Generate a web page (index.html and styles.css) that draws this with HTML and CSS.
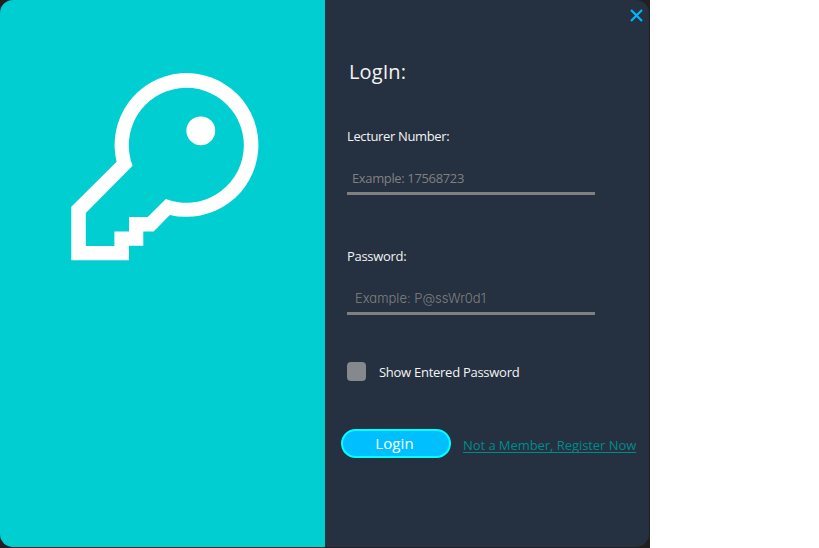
FILE: index.html
```html
<!DOCTYPE html>
<html lang="en">
<head>
<meta charset="utf-8">
<title>LogIn</title>
<link rel="stylesheet" href="styles.css">
</head>
<body>
<div class="window">
  <main class="card">
    <section class="brand">
      <svg class="key" viewBox="71 73 188 188" aria-hidden="true">
        <path fill="#fff" fill-rule="evenodd" d="M71.3 206.8 116.6 161.8A71.9 71.9 0 1 1 169.8 214.9L153.7 231.4H143.3V245.8H129V260.2H71.3ZM85.8 213V246H114.4V231.5H129V217.1H147.7L165.8 199A57.5 57.5 0 1 0 132.6 165.8Z"/>
        <circle cx="200.8" cy="130.8" r="14.4" fill="#fff"/>
      </svg>
    </section>
    <form class="form">
      <button class="close" type="button" aria-label="Close">
        <svg viewBox="0 0 13 13"><path d="M1 1 12 12M12 1 1 12"/></svg>
      </button>
      <h1 class="title"><span>LogIn:</span></h1>
      <div class="field">
        <label class="label number-label" for="number">Lecturer Number:</label>
        <div class="entry number-entry" id="number"><span>Example: 17568723</span></div>
      </div>
      <div class="field">
        <label class="label password-label" for="password">Password:</label>
        <div class="entry password-entry" id="password"><span>Example: P@ssWr0d1</span></div>
      </div>
      <div class="show"><span class="box"></span><span class="show-label">Show Entered Password</span></div>
      <div class="actions">
        <button class="login" type="button"><span>Login</span></button>
        <a class="register" href="#">Not a Member, Register Now</a>
      </div>
    </form>
  </main>
</div>
</body>
</html>
```
FILE: styles.css
```css
* { box-sizing: border-box; }
body {
  margin: 0;
  height: 548px;
  overflow: hidden;
  background: #fff;
  font-family: "Open Sans", "Noto Sans", sans-serif;
  font-size: 13px;
}
.window {
  width: 650px;
  height: 548px;
  padding: 0 1px 1px 0;
  background: #202020;
}
.card {
  display: flex;
  height: 547px;
  border-radius: 13px;
  overflow: hidden;
  background: #253040;
}
.brand {
  width: 325px;
  padding: 73px 0 0 71px;
  background: #00ced1;
}
.key { display: block; width: 188px; height: 188px; }
.form {
  position: relative;
  width: 324px;
  padding: 58px 0 0 22px;
  color: #f4f4f4;
}
.close {
  position: absolute;
  top: 9px;
  right: 6px;
  width: 13px;
  height: 13px;
  padding: 0;
  border: 0;
  background: none;
}
.close svg {
  display: block;
  width: 13px;
  height: 13px;
  stroke: #00b7f8;
  stroke-width: 2.2;
  fill: none;
}
.title {
  margin: 0 0 36px 2px;
  height: 28px;
  font-size: 20px;
  line-height: 28px;
  font-weight: 400;
  letter-spacing: 0.1px;
}
.field { height: 120px; padding-top: 4px; }
.label { display: block; height: 20px; line-height: 20px; white-space: nowrap; }
.number-label { letter-spacing: -0.36px; }
.password-label { letter-spacing: -0.3px; }
.entry {
  width: 248px;
  height: 49px;
  padding: 22px 0 0 5px;
  border-bottom: 3px solid #808080;
  color: #808080;
  line-height: 20px;
  white-space: nowrap;
}
.number-entry { letter-spacing: -0.36px; }
.password-entry {
  padding-left: 8px;
  font-family: Inter, sans-serif;
  font-feature-settings: "cv11";
  font-weight: 300;
}
.show { display: flex; height: 20px; gap: 13px; margin-top: -1px; }
.box { width: 19px; height: 19px; margin-top: 1px; border-radius: 4px; background: #85888d; }
.show-label { padding-top: 1px; line-height: 20px; letter-spacing: -0.27px; white-space: nowrap; }
.actions {
  display: flex;
  align-items: center;
  gap: 12px;
  margin: 48px 0 0 -6px;
}
.login {
  flex: none;
  width: 110px;
  height: 29px;
  padding: 0 3px 0 0;
  border: 2px solid #00ffff;
  border-radius: 15px;
  background: #00bfff;
  color: #fff;
  font: 15px/25px "Open Sans", sans-serif;
  letter-spacing: 0.1px;
}
.register {
  padding-top: 3px;
  color: #008b8b;
  line-height: 20px;
  letter-spacing: -0.06px;
  white-space: nowrap;
  text-underline-offset: 2px;
  text-decoration-thickness: 1px;
  text-decoration-skip-ink: none;
}
```
